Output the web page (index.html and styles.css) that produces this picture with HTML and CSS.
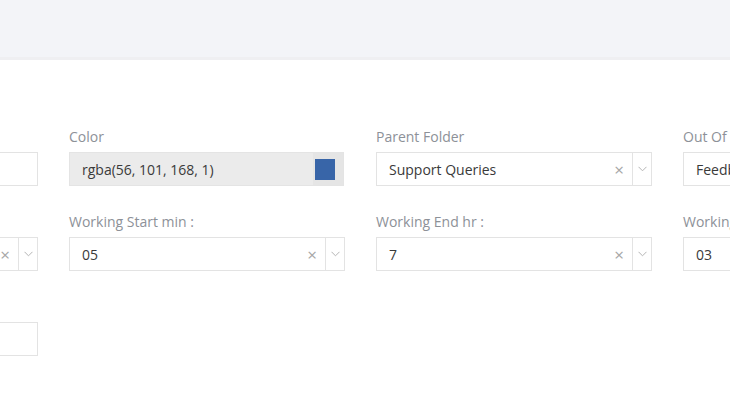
FILE: index.html
```html
<!DOCTYPE html>
<html>
<head>
<meta charset="utf-8">
<link rel="stylesheet" href="styles.css">
</head>
<body>
<div class="topbar"></div>
<div class="content">
  <div class="form-grid">
    <div class="group"><label class="lbl">Name</label><div class="field"></div></div>
    <div class="group"><label class="lbl">Color</label>
      <div class="field color-field"><span class="val">rgba(56, 101, 168, 1)</span><span class="addon"><span class="swatch"></span></span></div>
    </div>
    <div class="group"><label class="lbl">Parent Folder</label>
      <div class="field select"><span class="val">Support Queries</span><span class="clear">×</span><span class="arrow"><svg width="9" height="6" viewBox="0 0 9 6"><path d="M0.5 0.8 L4.5 4.8 L8.5 0.8" fill="none" stroke="#b5b5b5" stroke-width="1"/></svg></span></div>
    </div>
    <div class="group"><label class="lbl">Out Of Working Hours Folder</label>
      <div class="field select"><span class="val">Feedback</span><span class="clear">×</span><span class="arrow"><svg width="9" height="6" viewBox="0 0 9 6"><path d="M0.5 0.8 L4.5 4.8 L8.5 0.8" fill="none" stroke="#b5b5b5" stroke-width="1"/></svg></span></div>
    </div>

    <div class="group"><label class="lbl">Working Start hr :</label>
      <div class="field select"><span class="val">9</span><span class="clear">×</span><span class="arrow"><svg width="9" height="6" viewBox="0 0 9 6"><path d="M0.5 0.8 L4.5 4.8 L8.5 0.8" fill="none" stroke="#b5b5b5" stroke-width="1"/></svg></span></div>
    </div>
    <div class="group"><label class="lbl">Working Start min :</label>
      <div class="field select"><span class="val">05</span><span class="clear">×</span><span class="arrow"><svg width="9" height="6" viewBox="0 0 9 6"><path d="M0.5 0.8 L4.5 4.8 L8.5 0.8" fill="none" stroke="#b5b5b5" stroke-width="1"/></svg></span></div>
    </div>
    <div class="group"><label class="lbl">Working End hr :</label>
      <div class="field select"><span class="val">7</span><span class="clear">×</span><span class="arrow"><svg width="9" height="6" viewBox="0 0 9 6"><path d="M0.5 0.8 L4.5 4.8 L8.5 0.8" fill="none" stroke="#b5b5b5" stroke-width="1"/></svg></span></div>
    </div>
    <div class="group"><label class="lbl">Working End min :</label>
      <div class="field select"><span class="val">03</span><span class="clear">×</span><span class="arrow"><svg width="9" height="6" viewBox="0 0 9 6"><path d="M0.5 0.8 L4.5 4.8 L8.5 0.8" fill="none" stroke="#b5b5b5" stroke-width="1"/></svg></span></div>
    </div>

    <div class="group"><label class="lbl">Sort Order</label><div class="field"></div></div>
  </div>
</div>
</body>
</html>
```
FILE: styles.css
```css
html, body {
  margin: 0;
  padding: 0;
  background: #ffffff;
  font-family: "Open Sans", "Liberation Sans", sans-serif;
  overflow: hidden;
}
.topbar {
  height: 57px;
  background: #f3f4f8;
  border-bottom: 3px solid #efeff2;
}
.content {
  padding-top: 67px;
  overflow: hidden;
}
.form-grid {
  display: grid;
  grid-template-columns: repeat(4, 276px);
  column-gap: 31px;
  margin-left: -238px;
  width: 1200px;
}
.group {
  display: flex;
  flex-direction: column;
  margin-bottom: 26px;
}
.lbl {
  font-size: 14px;
  line-height: 20px;
  color: #8d9198;
  margin-bottom: 5px;
  white-space: nowrap;
}
.field {
  height: 34px;
  box-sizing: border-box;
  border: 1px solid #e3e3e3;
  background: #fff;
  display: flex;
  align-items: center;
  font-size: 14px;
  color: #3a3a3a;
}
.val {
  flex: 1;
  padding-left: 12px;
  white-space: nowrap;
  overflow: hidden;
}
.color-field {
  background: #ebebeb;
  border-color: #e4e4e4;
  margin-right: 1px;
}
.addon {
  width: 30px;
  align-self: stretch;
  background: #e5e5e5;
  display: flex;
  align-items: center;
  justify-content: flex-start;
  padding-left: 2px;
  box-sizing: border-box;
}
.swatch {
  width: 20px;
  height: 21px;
  background: rgb(56, 101, 168);
}
.select .clear {
  color: #a6a6a6;
  font-size: 17px;
  width: 26px;
  text-align: center;
  line-height: 1;
}
.select .arrow {
  width: 18px;
  align-self: stretch;
  border-left: 1px solid #e3e3e3;
  display: flex;
  align-items: center;
  justify-content: center;
}
```
